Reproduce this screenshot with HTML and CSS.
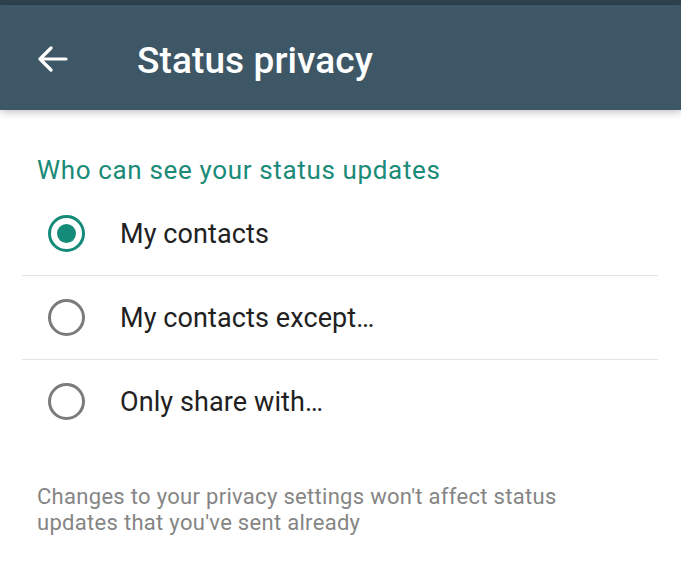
FILE: index.html
```html
<!DOCTYPE html>
<html>
<head>
<meta charset="utf-8">
<link rel="stylesheet" href="styles.css">
</head>
<body>
<div class="strip"></div>
<header class="appbar">
  <svg class="back" width="32" height="26" viewBox="0 0 32 26">
    <path d="M30 13H4M15 2L4 13l11 11" fill="none" stroke="#fff" stroke-width="3.2" stroke-linecap="round" stroke-linejoin="round"/>
  </svg>
  <h1 class="title">Status privacy</h1>
</header>
<main class="content">
  <h2 class="section">Who can see your status updates</h2>
  <ul class="options">
    <li class="option"><span class="radio checked"></span><span class="label">My contacts</span></li>
    <li class="option"><span class="radio"></span><span class="label">My contacts except…</span></li>
    <li class="option"><span class="radio"></span><span class="label">Only share with…</span></li>
  </ul>
  <p class="note">Changes to your privacy settings won't affect status updates that you've sent already</p>
</main>
</body>
</html>
```
FILE: styles.css
```css
html, body {
  margin: 0;
  padding: 0;
  background: #fff;
  width: 681px;
  height: 588px;
  overflow: hidden;
  font-family: Roboto, "Noto Sans", sans-serif;
}
.strip {
  height: 5px;
  background: #2f424e;
}
.appbar {
  height: 105px;
  background: #3e5767;
  display: flex;
  align-items: center;
  box-shadow: 0 2px 8px rgba(0,0,0,0.25);
  position: relative;
}
.back {
  margin-left: 36px;
  margin-top: 2px;
  flex: none;
}
.title {
  margin: 6px 0 0 69px;
  color: #fff;
  font-size: 37px;
  font-weight: 500;
  letter-spacing: 0.1px;
}
.content {
  padding: 42px 23px 0 22px;
}
.section {
  margin: 0 0 0 15px;
  font-size: 26px;
  font-weight: 400;
  letter-spacing: 0.65px;
  color: #1b8a78;
  line-height: 36px;
}
.options {
  list-style: none;
  margin: 4px 0 0 0;
  padding: 0;
}
.option {
  height: 83px;
  display: flex;
  align-items: center;
  border-bottom: 1px solid #e4e4e4;
}
.option:last-child {
  border-bottom: none;
}
.radio {
  width: 37px;
  height: 37px;
  box-sizing: border-box;
  border-radius: 50%;
  border: 3.5px solid #7b7b7b;
  margin-left: 26px;
  flex: none;
  display: flex;
  align-items: center;
  justify-content: center;
}
.radio.checked {
  border-color: #148b79;
}
.radio.checked::after {
  content: "";
  width: 19px;
  height: 19px;
  border-radius: 50%;
  background: #148b79;
}
.label {
  margin-left: 35px;
  font-size: 27px;
  letter-spacing: 0.1px;
  color: #212121;
}
.note {
  margin: 41px 0 0 15px;
  font-size: 22px;
  letter-spacing: 0.3px;
  line-height: 26px;
  color: #858585;
  width: 560px;
}
```
